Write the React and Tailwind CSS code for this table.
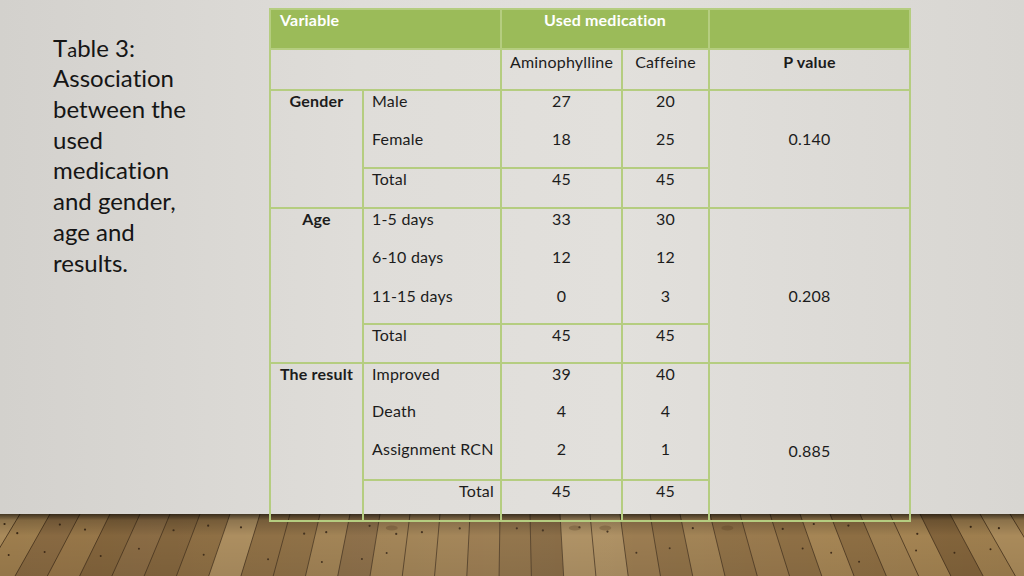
import React from 'react';

const plankColors = ['#9d7d4d', '#8a6a3e', '#a98a5a', '#816239', '#957446', '#a2814f', '#876840', '#b09262'];

const rnd = (n) => {
  const s = Math.sin(n * 12.9898) * 43758.5453;
  return s - Math.floor(s);
};

const Floor = () => {
  const planks = [];
  const vx = 512;
  const depth = 820;
  for (let i = -14; i < 46; i++) {
    const x0 = i * 30 - 10;
    const x1 = x0 + 30;
    const b0 = x0 + ((x0 - vx) * 62) / depth;
    const b1 = x1 + ((x1 - vx) * 62) / depth;
    planks.push({ i, x0, x1, b0, b1, color: plankColors[Math.floor(rnd(i + 50) * plankColors.length)] });
  }
  const at = (p, t, dx) => p.x0 + dx + ((p.b0 - p.x0) * t) / 62;
  return (
    <svg width="1024" height="62" viewBox="0 0 1024 62" className="block">
      <defs>
        <linearGradient id="shade" x1="0" y1="0" x2="0" y2="1">
          <stop offset="0" stopColor="#000" stopOpacity="0.6" />
          <stop offset="0.1" stopColor="#000" stopOpacity="0.18" />
          <stop offset="0.35" stopColor="#000" stopOpacity="0" />
          <stop offset="1" stopColor="#000" stopOpacity="0.06" />
        </linearGradient>
        <linearGradient id="glow" x1="0" y1="0" x2="1" y2="0">
          <stop offset="0" stopColor="#fff" stopOpacity="0" />
          <stop offset="0.5" stopColor="#fff" stopOpacity="0.08" />
          <stop offset="1" stopColor="#fff" stopOpacity="0" />
        </linearGradient>
      </defs>
      <rect width="1024" height="62" fill="#8d6d40" />
      {planks.map((p) => (
        <g key={p.i}>
          <polygon points={`${p.x0},0 ${p.x1},0 ${p.b1},62 ${p.b0},62`} fill={p.color} />
          <line x1={p.x0} y1="0" x2={p.b0} y2="62" stroke="#3f2c18" strokeWidth="1" strokeOpacity="0.75" />
          {rnd(p.i + 3) > 0.35 && (
            <circle cx={at(p, 10 + rnd(p.i) * 10, 8 + rnd(p.i + 1) * 14)} cy={10 + rnd(p.i) * 10} r="1.1" fill="#3d2a16" />
          )}
          {rnd(p.i + 9) > 0.5 && (
            <circle cx={at(p, 32 + rnd(p.i + 2) * 16, 6 + rnd(p.i + 4) * 16)} cy={32 + rnd(p.i + 2) * 16} r="1" fill="#3d2a16" />
          )}
          {rnd(p.i + 17) > 0.85 && (
            <ellipse cx={at(p, 14, 14)} cy="14" rx="6" ry="2.5" fill="#5b3f1f" fillOpacity="0.35" />
          )}
        </g>
      ))}
      <rect width="1024" height="62" fill="url(#glow)" />
      <rect width="1024" height="62" fill="url(#shade)" />
    </svg>
  );
};

const cellBorder = 'border-2 border-[#b5cd80]';

const Td = ({ children, className = '', ...rest }) => (
  <td className={`${cellBorder} align-top pt-[1px] leading-[18px] ${className}`} {...rest}>
    {children}
  </td>
);

const groups = [
  {
    name: 'Gender',
    p: '0.140',
    pPad: 'pt-[39px]',
    rows: [
      ['Male', '27', '20', 'h-[39px]'],
      ['Female', '18', '25', 'h-[39px]'],
    ],
    total: ['Total', '45', '45', 'h-[40px]'],
  },
  {
    name: 'Age',
    p: '0.208',
    pPad: 'pt-[78px]',
    rows: [
      ['1-5 days', '33', '30', 'h-[39px]'],
      ['6-10 days', '12', '12', 'h-[39px]'],
      ['11-15 days', '0', '3', 'h-[38px]'],
    ],
    total: ['Total', '45', '45', 'h-[39px]'],
  },
  {
    name: 'The result',
    p: '0.885',
    pPad: 'pt-[78px]',
    rows: [
      ['Improved', '39', '40', 'h-[38px]'],
      ['Death', '4', '4', 'h-[38px]'],
      ['Assignment RCN', '2', '1', 'h-[41px]'],
    ],
    total: ['Total', '45', '45', 'h-[41px]'],
    totalRight: true,
  },
];

const DataTable = () => (
  <table className="table-fixed border-collapse w-[640px] text-[16px] tracking-[0.2px] text-[#1c1c1c] font-['Lato','Liberation_Sans',sans-serif]">
    <colgroup>
      <col className="w-[93px]" />
      <col className="w-[138px]" />
      <col className="w-[121px]" />
      <col className="w-[87px]" />
      <col className="w-[201px]" />
    </colgroup>
    <tbody>
      <tr className="h-[40px] bg-[#9bbb59] text-white font-bold">
        <Td colSpan={2} className="text-left pl-[9px]">Variable</Td>
        <Td colSpan={2} className="text-center">Used medication</Td>
        <Td />
      </tr>
      <tr className="h-[41px]">
        <Td colSpan={2} />
        <Td className="text-center pt-[3px]">Aminophylline</Td>
        <Td className="text-center pt-[3px]">Caffeine</Td>
        <Td className="text-center font-bold pt-[3px]">P value</Td>
      </tr>
      {groups.map((g) => (
        <React.Fragment key={g.name}>
          {g.rows.map((r, idx) => (
            <tr key={r[0]} className={r[3]}>
              {idx === 0 && (
                <Td rowSpan={g.rows.length + 1} className="text-center font-bold">
                  {g.name}
                </Td>
              )}
              <Td className={`pl-[8px] ${idx < g.rows.length - 1 ? 'border-b-0' : ''} ${idx > 0 ? 'border-t-0' : ''}`}>
                {r[0]}
              </Td>
              <Td className={`text-center ${idx < g.rows.length - 1 ? 'border-b-0' : ''} ${idx > 0 ? 'border-t-0' : ''}`}>
                {r[1]}
              </Td>
              <Td className={`text-center ${idx < g.rows.length - 1 ? 'border-b-0' : ''} ${idx > 0 ? 'border-t-0' : ''}`}>
                {r[2]}
              </Td>
              {idx === 0 && (
                <Td rowSpan={g.rows.length + 1} className={`text-center ${g.pPad}`}>
                  {g.p}
                </Td>
              )}
            </tr>
          ))}
          <tr className={g.total[3]}>
            <Td className={g.totalRight ? 'text-right pr-[6px]' : 'pl-[8px]'}>{g.total[0]}</Td>
            <Td className="text-center">{g.total[1]}</Td>
            <Td className="text-center">{g.total[2]}</Td>
          </tr>
        </React.Fragment>
      ))}
    </tbody>
  </table>
);

export default function App() {
  return (
    <div className="relative w-[1024px] h-[576px] overflow-hidden bg-[linear-gradient(90deg,#d3d1cd_0%,#dfddd9_35%,#e2e0dc_60%,#d8d6d2_100%)]">
      <div className="absolute left-0 bottom-0 w-[1024px] h-[62px]">
        <Floor />
      </div>
      <div className="relative flex">
        <div className="w-[269px] shrink-0 pl-[53px] pt-[33px]">
          <div className="w-[140px] text-[24px] leading-[30.8px] text-[#151515] font-['Lato','Open_Sans',sans-serif] [font-variant-ligatures:none]">
            <p className="h-[30px]">
              T<span className="text-[20px] leading-none">a</span>ble 3:
            </p>
            <p>Association between the used medication and gender, age and results.</p>
          </div>
        </div>
        <div className="pt-[8px]">
          <DataTable />
        </div>
      </div>
    </div>
  );
}
